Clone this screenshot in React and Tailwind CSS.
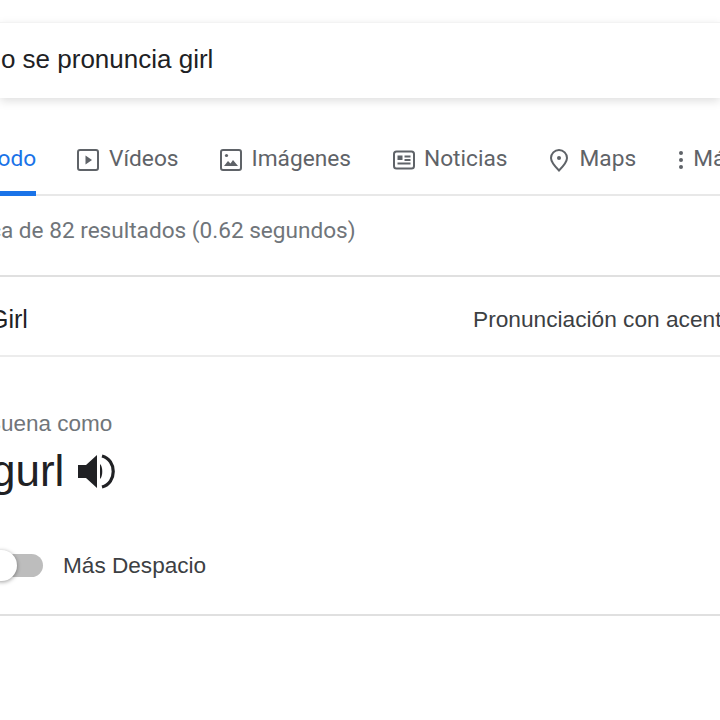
const Tab = ({ icon, label, className }) => (
  <div className={`flex items-center shrink-0 h-[55px] text-[#5f6368] ${className}`}>
    {icon}
    <span className="text-[22.7px] leading-[38px] mb-[17px] whitespace-nowrap">{label}</span>
  </div>
);

export default function App() {
  return (
    <div className="w-[720px] h-[720px] overflow-hidden bg-white flex flex-col font-['Roboto',sans-serif]">
      <div className="mt-[22px] h-[76px] shrink-0 bg-white flex items-center border-t border-[#f3f3f3] shadow-[0_3px_9px_rgba(0,0,0,0.13)]">
        <span className="ml-[-54px] text-[26px] -mt-[2px] text-[#202124] whitespace-nowrap font-['Liberation_Sans',sans-serif]">Cómo se pronuncia girl</span>
      </div>

      <div className="mt-[42px] h-[56px] shrink-0 flex items-center border-b-2 border-[#e8e8e8] relative">
        <div className="flex items-center h-[55px] ml-[-22px] w-[58px] relative shrink-0">
          <span className="text-[22.7px] leading-[38px] mb-[17px] text-[#1a73e8] ml-[7px]">Todo</span>
          <span className="absolute left-0 right-0 bottom-[-1px] h-[5px] bg-[#1a73e8]"></span>
        </div>
        <Tab className="ml-[40px]" label="Vídeos" icon={
          <svg className="w-[24px] h-[24px] mr-[9px] mb-[14px]" viewBox="0 0 24 24" fill="none"><rect x="2" y="2" width="20" height="20" rx="2" stroke="#5f6368" strokeWidth="2"/><path d="M9.5 7.5v9l6.5-4.5z" fill="#5f6368"/></svg>
        }/>
        <Tab className="ml-[40px]" label="Imágenes" icon={
          <svg className="w-[24px] h-[24px] mr-[9px] mb-[14px]" viewBox="0 0 24 24" fill="none"><rect x="2" y="2" width="20" height="20" rx="2" stroke="#5f6368" strokeWidth="2"/><circle cx="7.5" cy="7.5" r="1.6" fill="#5f6368"/><path d="M5 18l4-5 2.5 2.5L14 12l5 6z" fill="#5f6368"/></svg>
        }/>
        <Tab className="ml-[41px]" label="Noticias" icon={
          <svg className="w-[24px] h-[24px] mr-[8px] mb-[14px]" viewBox="0 0 24 24" fill="none"><rect x="2" y="3.5" width="20" height="17" rx="2.5" stroke="#5f6368" strokeWidth="2"/><path d="M5.5 7.5h5v4.5h-5zM12.5 7.5h6v2h-6zM12.5 11h6v2h-6zM5.5 14.5h13v2h-13z" fill="#5f6368"/></svg>
        }/>
        <Tab className="ml-[39px]" label="Maps" icon={
          <svg className="w-[24px] h-[24px] mr-[9px] mb-[14px]" viewBox="0 0 24 24" fill="none"><path d="M12 2a8 8 0 0 0-8 8c0 3.5 3 7.5 8 12.5 5-5 8-9 8-12.5a8 8 0 0 0-8-8z" stroke="#5f6368" strokeWidth="2"/><circle cx="12" cy="10" r="2" fill="#5f6368"/></svg>
        }/>
        <Tab className="ml-[33px]" label="Más" icon={
          <svg className="w-[24px] h-[24px] mb-[14px]" viewBox="0 0 24 24" fill="#5f6368"><circle cx="12" cy="5" r="2"/><circle cx="12" cy="12" r="2"/><circle cx="12" cy="19" r="2"/></svg>
        }/>
      </div>

      <div className="h-[81px] shrink-0 flex items-center border-b-2 border-[#e0e0e0]">
        <span className="ml-[-45px] text-[22.6px] text-[#70757a] whitespace-nowrap -mt-[9px]">Cerca de 82 resultados (0.62 segundos)</span>
      </div>

      <div className="h-[80px] shrink-0 flex items-center border-b-2 border-[#ececec] whitespace-nowrap font-['Liberation_Sans',sans-serif]">
        <span className="ml-[-11px] w-[39px] shrink-0 text-[25px] text-[#202124] mt-[8px]">Girl</span>
        <span className="text-[22.7px] text-[#3c4043] ml-[445px] shrink-0 mt-[6px]">Pronunciación con acento</span>
      </div>

      <div className="mt-[52px] ml-[-14px] text-[22.5px] leading-[30px] text-[#70757a] whitespace-nowrap font-['Liberation_Sans',sans-serif]">Suena como</div>
      <div className="mt-[2px] ml-[-9px] h-[60px] flex items-center shrink-0">
        <span className="text-[44px] text-[#202124] font-['Liberation_Sans',sans-serif] leading-[60px]">gurl</span>
        <svg className="ml-[14px] w-[37px] h-[37px]" viewBox="0 0 37 37" fill="none"><path d="M0 12h8L19 2v33L8 25H0z" fill="#202124"/><path d="M22 11c3 2 3 13 0 15z" fill="#202124"/><path d="M24 3c15 4 15 27 0 31" stroke="#202124" strokeWidth="3.2"/></svg>
      </div>

      <div className="mt-[44px] flex items-center h-[40px] shrink-0">
        <div className="relative ml-[-14px] w-[57px] h-[23px] rounded-full bg-[#bdbdbd] shrink-0">
          <span className="absolute left-0 top-[-4px] w-[31px] h-[31px] rounded-full bg-white shadow-[0_1px_4px_rgba(0,0,0,0.4)]"></span>
        </div>
        <span className="ml-[20px] mt-[2px] text-[22.6px] text-[#3c4043] font-['Liberation_Sans',sans-serif] whitespace-nowrap">Más Despacio</span>
      </div>

      <div className="mt-[29px] h-[2px] bg-[#e0e0e0] shrink-0"></div>
    </div>
  );
}
